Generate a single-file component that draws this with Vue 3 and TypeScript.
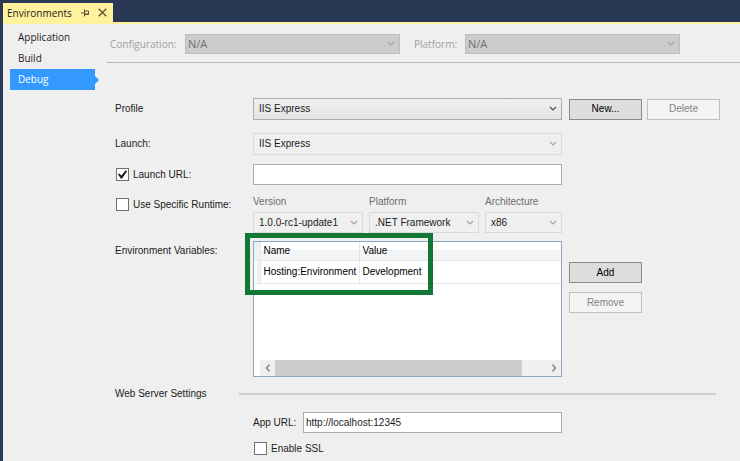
<script setup lang="ts">
import { ref } from 'vue'

interface EnvVariable {
  name: string
  value: string
}

const sections = ['Application', 'Build', 'Debug']
const activeSection = ref('Debug')

const launchUrlEnabled = ref(true)
const launchUrl = ref('')
const specificRuntime = ref(false)
const appUrl = ref('http://localhost:12345')
const enableSsl = ref(false)

const runtimeFields = [
  { id: 'version', label: 'Version', value: '1.0.0-rc1-update1' },
  { id: 'runtime-platform', label: 'Platform', value: '.NET Framework' },
  { id: 'architecture', label: 'Architecture', value: 'x86' },
]

const variables = ref<EnvVariable[]>([{ name: 'Hosting:Environment', value: 'Development' }])
</script>

<template>
  <div class="window">
    <header class="tabs">
      <div class="tab">
        <span class="tab-title">Environments</span>
        <button class="tab-icon" type="button" aria-label="Pin">
          <svg width="9" height="8" viewBox="0 0 9 8" fill="none" stroke="#5c5333">
            <path d="M0 4H3M3.5 0.5V7.5M3.5 2H7.5V5.5H3.5M3.5 5H7.5" />
          </svg>
        </button>
        <button class="tab-icon" type="button" aria-label="Close">
          <svg width="9" height="9" viewBox="0 0 9 9" fill="none" stroke="#5c5333" stroke-width="1.3">
            <path d="M0.7 0.7L8.3 8.3M8.3 0.7L0.7 8.3" />
          </svg>
        </button>
      </div>
    </header>

    <div class="panel">
      <nav class="nav">
        <a
          v-for="section in sections"
          :key="section"
          href="#"
          class="nav-item"
          :class="{ active: section === activeSection }"
          @click.prevent="activeSection = section"
        >{{ section }}</a>
      </nav>

      <main class="main">
        <div class="target">
          <label for="configuration">Configuration:</label>
          <div class="combo combo-target">
            <select id="configuration" disabled><option>N/A</option></select>
            <svg class="chevron" width="8" height="6" viewBox="0 0 8 6"><path d="M1 1L4 4L7 1" /></svg>
          </div>
          <label class="target-platform" for="platform">Platform:</label>
          <div class="combo combo-target">
            <select id="platform" disabled><option>N/A</option></select>
            <svg class="chevron" width="8" height="6" viewBox="0 0 8 6"><path d="M1 1L4 4L7 1" /></svg>
          </div>
        </div>

        <form class="form" @submit.prevent>
          <div class="row row-profile">
            <label for="profile">Profile</label>
            <div class="combo combo-enabled">
              <select id="profile"><option>IIS Express</option></select>
              <svg class="chevron" width="8" height="6" viewBox="0 0 8 6"><path d="M1 1L4 4L7 1" /></svg>
            </div>
            <div class="buttons">
              <button type="button" class="btn">New...</button>
              <button type="button" class="btn" disabled>Delete</button>
            </div>
          </div>

          <div class="row row-launch">
            <label for="launch">Launch:</label>
            <div class="combo">
              <select id="launch" disabled><option>IIS Express</option></select>
              <svg class="chevron" width="8" height="6" viewBox="0 0 8 6"><path d="M1 1L4 4L7 1" /></svg>
            </div>
          </div>

          <div class="row row-url">
            <label class="check"><input v-model="launchUrlEnabled" type="checkbox" />Launch URL:</label>
            <input v-model="launchUrl" class="text" type="text" aria-label="Launch URL" />
          </div>

          <div class="row row-runtime">
            <label class="check"><input v-model="specificRuntime" type="checkbox" />Use Specific Runtime:</label>
            <div class="runtime">
              <div v-for="field in runtimeFields" :key="field.id" class="runtime-field">
                <label :for="field.id">{{ field.label }}</label>
                <div class="combo">
                  <select :id="field.id" disabled><option>{{ field.value }}</option></select>
                  <svg class="chevron" width="8" height="6" viewBox="0 0 8 6"><path d="M1 1L4 4L7 1" /></svg>
                </div>
              </div>
            </div>
          </div>

          <div class="row row-variables">
            <span id="variables-label" class="variables-label">Environment Variables:</span>
            <div class="grid-box">
              <table class="variables" aria-labelledby="variables-label">
                <thead>
                  <tr>
                    <th class="gutter"></th>
                    <th class="col-name">Name</th>
                    <th class="col-value">Value</th>
                    <th></th>
                  </tr>
                </thead>
                <tbody>
                  <tr v-for="variable in variables" :key="variable.name">
                    <td class="gutter"></td>
                    <td>{{ variable.name }}</td>
                    <td>{{ variable.value }}</td>
                    <td></td>
                  </tr>
                </tbody>
              </table>
              <div class="scrollbar">
                <button type="button" aria-label="Scroll left">
                  <svg width="6" height="8" viewBox="0 0 6 8"><path d="M4.5 0.5L1.5 4L4.5 7.5" /></svg>
                </button>
                <div class="track"><div class="thumb"></div></div>
                <button type="button" aria-label="Scroll right">
                  <svg width="6" height="8" viewBox="0 0 6 8"><path d="M1.5 0.5L4.5 4L1.5 7.5" /></svg>
                </button>
              </div>
              <div class="highlight"></div>
            </div>
            <div class="buttons stacked">
              <button type="button" class="btn">Add</button>
              <button type="button" class="btn" disabled>Remove</button>
            </div>
          </div>

          <div class="divider">
            <span class="divider-title">Web Server Settings</span>
            <hr />
          </div>

          <div class="row row-app">
            <div class="app-url">
              <label for="app-url">App URL:</label>
              <input id="app-url" v-model="appUrl" class="text" type="text" />
            </div>
          </div>
          <div class="row row-ssl">
            <label class="check ssl"><input v-model="enableSsl" type="checkbox" />Enable SSL</label>
          </div>
        </form>
      </main>
    </div>
  </div>
</template>

<style>
body {
  background: #293955;
}
</style>

<style scoped>
.window,
.window * {
  box-sizing: border-box;
}

.window {
  display: flex;
  flex-direction: column;
  min-height: 100vh;
  padding: 3px 0 0 3px;
  background: #293955;
  color: #1b1b1b;
  font-family: 'Liberation Sans', Arial, sans-serif;
  font-size: 10px;
  line-height: 12px;
}

button,
select,
input {
  margin: 0;
  font: inherit;
  color: inherit;
}

.tabs {
  display: flex;
  border-bottom: 2px solid #fff29d;
}

.tab {
  display: flex;
  align-items: center;
  height: 19px;
  padding: 0 6px 0 4px;
  background: #fff29d;
  font-family: 'Open Sans', 'Noto Sans', sans-serif;
}

.tab-title {
  margin-right: 9px;
}

.tab-icon {
  display: flex;
  padding: 0;
  border: 0;
  background: none;
}

.tab-icon + .tab-icon {
  margin-left: 8px;
}

.panel {
  display: flex;
  flex: 1;
  background: #efefef;
}

.nav {
  flex: none;
  width: 92px;
  padding: 3px 0 0 7px;
  font-family: 'Open Sans', 'Noto Sans', sans-serif;
}

.nav-item {
  position: relative;
  display: block;
  padding-left: 8px;
  color: inherit;
  line-height: 21px;
  text-decoration: none;
}

.nav-item.active {
  background: #3399ff;
  color: #fff;
}

.nav-item.active::after {
  content: '';
  position: absolute;
  top: 7px;
  left: 100%;
  border: solid transparent;
  border-width: 4px 0 4px 4px;
  border-left-color: #3399ff;
}

.main {
  flex: 1;
  min-width: 0;
  padding-left: 12px;
}

.target {
  display: grid;
  grid-template-columns: 75px 1fr 65px 1fr;
  align-items: center;
  padding: 10px 60px 8px 3px;
  border-bottom: 1px solid #b9b9b9;
  color: #a0a0a0;
  font-family: 'Open Sans', 'Noto Sans', sans-serif;
}

.target-platform {
  padding-left: 14px;
}

.combo {
  display: grid;
  align-items: center;
}

.combo select,
.combo .chevron {
  grid-area: 1 / 1;
}

.combo select {
  width: 100%;
  height: 22px;
  padding: 0 0 0 5px;
  appearance: none;
  border: 1px solid #d9d9d9;
  border-radius: 0;
  background: #efefef;
  color: #1b1b1b;
  opacity: 1;
}

.chevron {
  justify-self: end;
  margin-right: 5px;
  fill: none;
  stroke: #a6a6a6;
  stroke-width: 1.2;
  pointer-events: none;
}

.combo-enabled select {
  border-color: #acacac;
  background: linear-gradient(#f0f0f0, #e3e3e3);
}

.combo-enabled .chevron {
  stroke: #505050;
}

.combo-target select {
  height: 20px;
  padding-left: 2px;
  border-color: #bfbfbf;
  background: #cccccc;
  color: #6d6d6d;
  font-size: 11px;
}

.form {
  padding: 35px 20px 0 8px;
}

.row {
  display: grid;
  grid-template-columns: 138px minmax(0, 1fr) 158px;
  align-items: center;
}

.row-launch {
  margin-top: 13px;
}

.row-url {
  margin-top: 9px;
}

.row-runtime {
  align-items: start;
  margin-top: 11px;
}

.row-variables {
  align-items: start;
  margin-top: 8px;
}

.row-app {
  margin-top: 12px;
}

.row-ssl {
  margin-top: 9px;
}

.buttons {
  display: flex;
  gap: 5px;
  padding-left: 7px;
}

.buttons.stacked {
  flex-direction: column;
  gap: 9px;
  padding-top: 21px;
}

.btn {
  width: 73px;
  height: 21px;
  padding: 0;
  border: 1px solid #8a8a8a;
  background: #dddddd;
  color: #000;
}

.btn:disabled {
  border-color: #bfbfbf;
  background: #f4f4f4;
  color: #838383;
}

.text {
  width: 100%;
  height: 21px;
  padding: 0 2px;
  border: 1px solid #abadb3;
  border-radius: 0;
  background: #fff;
}

.check {
  display: flex;
  align-items: center;
  gap: 4px;
  padding-left: 1px;
}

.row-runtime .check {
  padding-top: 2px;
}

.check input {
  display: grid;
  place-items: center;
  width: 13px;
  height: 13px;
  appearance: none;
  border: 1px solid #707070;
  background: #fff;
}

.check input:checked::after {
  content: '';
  width: 9px;
  height: 9px;
  background: #1b1b1b;
  clip-path: polygon(0 50%, 14% 38%, 38% 62%, 86% 4%, 100% 16%, 42% 96%, 34% 96%);
}

.runtime {
  display: grid;
  grid-template-columns: 110fr 110fr 77fr;
  gap: 6px;
}

.runtime-field {
  display: grid;
  gap: 4px;
  min-width: 0;
  color: #6d6d6d;
}

.runtime-field .combo select {
  height: 21px;
}

.variables-label {
  padding-top: 4px;
}

.grid-box {
  position: relative;
  display: flex;
  flex-direction: column;
  justify-content: space-between;
  min-height: 136px;
  border: 1px solid #8ea5c0;
  background: #fff;
}

.variables {
  width: 100%;
  border-collapse: collapse;
  table-layout: fixed;
  color: #000;
}

.variables th,
.variables td {
  padding: 0 0 0 3px;
  border-right: 1px solid #e8e8e8;
  border-bottom: 1px solid #e8e8e8;
  text-align: left;
  white-space: nowrap;
}

.variables th {
  height: 18px;
  background: linear-gradient(#fff 45%, #f3f4f6 45%);
  font-weight: 400;
}

.variables td {
  height: 23px;
}

.variables .gutter {
  width: 6px;
  padding: 0;
  background: #f0f0f0;
}

.variables td.gutter {
  background: linear-gradient(to right, #fff 50%, #f0f0f0 50%);
}

.variables .col-name {
  width: 99px;
}

.variables .col-value {
  width: 73px;
}

.variables tr > :last-child {
  border-right: 0;
}

.scrollbar {
  display: flex;
  height: 16px;
  margin-left: 6px;
  background: #f0f0f0;
}

.scrollbar button {
  display: grid;
  place-items: center;
  width: 15px;
  padding: 0;
  border: 0;
  background: none;
}

.scrollbar svg {
  fill: none;
  stroke: #868686;
  stroke-width: 1.5;
}

.track {
  flex: 1;
}

.thumb {
  width: 91%;
  height: 100%;
  background: #cdcdcd;
}

.highlight {
  position: absolute;
  top: -9px;
  left: -9px;
  width: 188px;
  height: 62px;
  border: 5px solid #107735;
  pointer-events: none;
}

.divider {
  display: grid;
  grid-template-columns: 124px 1fr;
  align-items: center;
  margin: 11px 4px 0 0;
}

.divider hr {
  width: 100%;
  margin: 0;
  border: 0;
  border-top: 2px solid #cfcfcf;
}

.app-url {
  display: grid;
  grid-column: 2;
  grid-template-columns: 50px 1fr;
  align-items: center;
}

.ssl {
  grid-column: 2;
}
</style>
